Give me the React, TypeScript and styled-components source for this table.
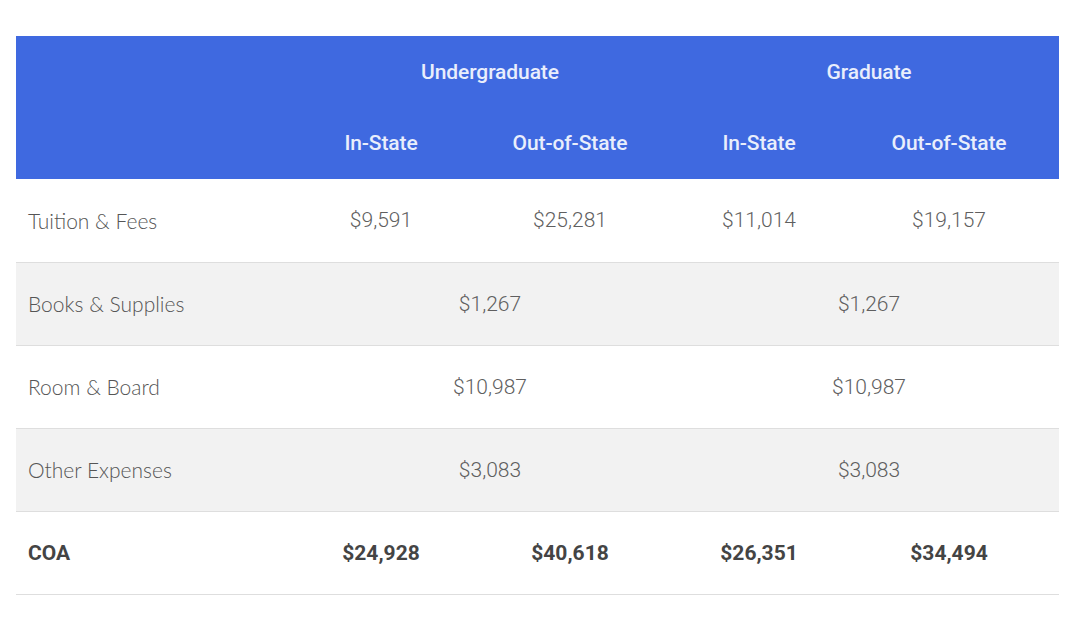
import React from "react"
import styled, { createGlobalStyle } from "styled-components"

const GlobalStyle = createGlobalStyle`
  html, body {
    margin: 0;
    padding: 0;
    background: #ffffff;
  }
  body {
    font-family: Roboto, "Liberation Sans", sans-serif;
  }
`

const Page = styled.div`
  padding: 36px 21px 0 16px;
`

const CostTable = styled.table`
  width: 1043px;
  border-collapse: collapse;
  table-layout: fixed;
`

const HeadRow = styled.tr`
  height: 71.5px;
  background-color: #3f69e0;
`

const HeadCell = styled.th`
  padding: 0;
  text-align: center;
  vertical-align: middle;
  font-family: Roboto, "Liberation Sans", sans-serif;
  font-weight: 500;
  font-size: 21px;
  letter-spacing: -0.1px;
  color: #e9eefc;
`

const BodyRow = styled.tr<{ $shaded?: boolean }>`
  height: 83px;
  background-color: ${({ $shaded }) => ($shaded ? "#f2f2f2" : "#ffffff")};
  border-bottom: 1px solid #dedede;
`

const Label = styled.td<{ $total?: boolean }>`
  padding: 0 0 0 12px;
  text-align: left;
  font-family: ${({ $total }) =>
    $total ? 'Roboto, "Liberation Sans", sans-serif' : 'Lato, "Open Sans", sans-serif'};
  font-size: 21px;
  font-weight: ${({ $total }) => ($total ? 700 : 300)};
  color: ${({ $total }) => ($total ? "#444444" : "#555555")};
`

const Amount = styled.td<{ $total?: boolean }>`
  padding: 0;
  text-align: center;
  font-family: Roboto, "Liberation Sans", sans-serif;
  font-size: 21px;
  font-weight: ${({ $total }) => ($total ? 700 : 300)};
  color: ${({ $total }) => ($total ? "#444444" : "#5f5f5f")};
`

type Row = {
  label: string
  values: string[]
  split: boolean
}

const rows: Row[] = [
  { label: "Tuition & Fees", values: ["$9,591", "$25,281", "$11,014", "$19,157"], split: true },
  { label: "Books & Supplies", values: ["$1,267", "$1,267"], split: false },
  { label: "Room & Board", values: ["$10,987", "$10,987"], split: false },
  { label: "Other Expenses", values: ["$3,083", "$3,083"], split: false },
]

const totals = ["$24,928", "$40,618", "$26,351", "$34,494"]

export default function App() {
  return (
    <>
      <GlobalStyle />
      <Page>
        <CostTable>
          <colgroup>
            <col style={{ width: 285 }} />
            <col style={{ width: 160 }} />
            <col style={{ width: 218 }} />
            <col style={{ width: 160 }} />
            <col style={{ width: 220 }} />
          </colgroup>
          <thead>
            <HeadRow>
              <HeadCell />
              <HeadCell colSpan={2}>Undergraduate</HeadCell>
              <HeadCell colSpan={2}>Graduate</HeadCell>
            </HeadRow>
            <HeadRow>
              <HeadCell />
              <HeadCell>In-State</HeadCell>
              <HeadCell>Out-of-State</HeadCell>
              <HeadCell>In-State</HeadCell>
              <HeadCell>Out-of-State</HeadCell>
            </HeadRow>
          </thead>
          <tbody>
            {rows.map((row, i) => (
              <BodyRow key={row.label} $shaded={i % 2 === 1}>
                <Label>{row.label}</Label>
                {row.values.map((v, j) => (
                  <Amount key={j} colSpan={row.split ? 1 : 2}>
                    {v}
                  </Amount>
                ))}
              </BodyRow>
            ))}
            <BodyRow>
              <Label $total>COA</Label>
              {totals.map((v, j) => (
                <Amount key={j} $total>
                  {v}
                </Amount>
              ))}
            </BodyRow>
          </tbody>
        </CostTable>
      </Page>
    </>
  )
}
